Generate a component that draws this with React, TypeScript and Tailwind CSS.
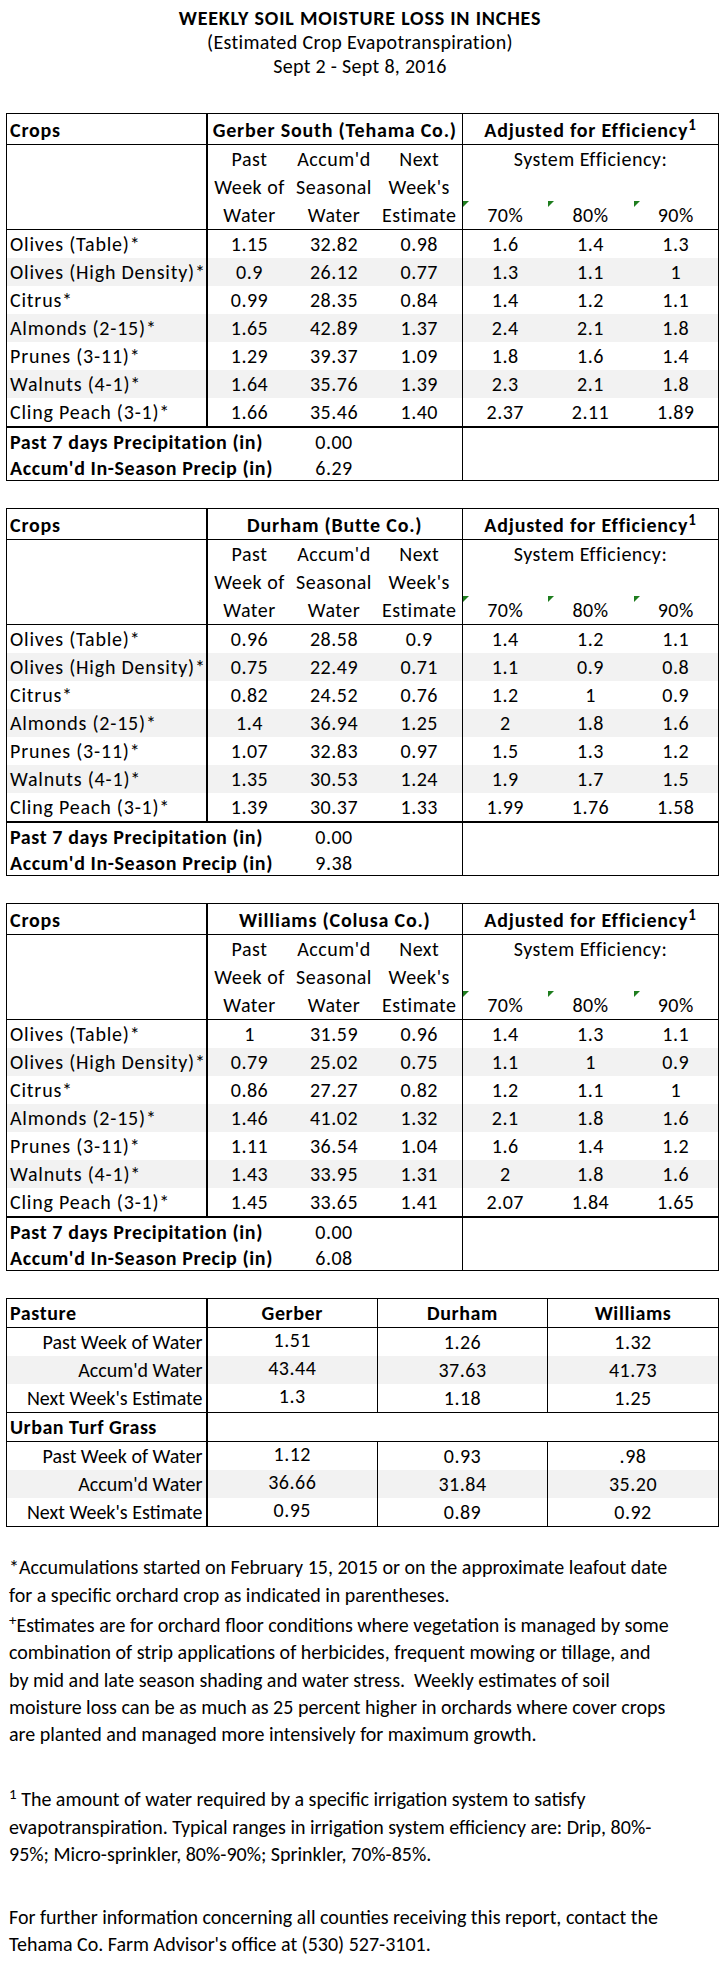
import React from 'react'

type Site = {
  title: string
  rows: string[][]
  precip: string
  accum: string
}

const crops = [
  'Olives (Table)*',
  'Olives (High Density)*',
  'Citrus*',
  'Almonds (2-15)*',
  'Prunes (3-11)*',
  'Walnuts (4-1)*',
  'Cling Peach (3-1)*',
]

const sites: Site[] = [
  {
    title: 'Gerber South (Tehama Co.)',
    rows: [
      ['1.15', '32.82', '0.98', '1.6', '1.4', '1.3'],
      ['0.9', '26.12', '0.77', '1.3', '1.1', '1'],
      ['0.99', '28.35', '0.84', '1.4', '1.2', '1.1'],
      ['1.65', '42.89', '1.37', '2.4', '2.1', '1.8'],
      ['1.29', '39.37', '1.09', '1.8', '1.6', '1.4'],
      ['1.64', '35.76', '1.39', '2.3', '2.1', '1.8'],
      ['1.66', '35.46', '1.40', '2.37', '2.11', '1.89'],
    ],
    precip: '0.00',
    accum: '6.29',
  },
  {
    title: 'Durham (Butte Co.)',
    rows: [
      ['0.96', '28.58', '0.9', '1.4', '1.2', '1.1'],
      ['0.75', '22.49', '0.71', '1.1', '0.9', '0.8'],
      ['0.82', '24.52', '0.76', '1.2', '1', '0.9'],
      ['1.4', '36.94', '1.25', '2', '1.8', '1.6'],
      ['1.07', '32.83', '0.97', '1.5', '1.3', '1.2'],
      ['1.35', '30.53', '1.24', '1.9', '1.7', '1.5'],
      ['1.39', '30.37', '1.33', '1.99', '1.76', '1.58'],
    ],
    precip: '0.00',
    accum: '9.38',
  },
  {
    title: 'Williams (Colusa Co.)',
    rows: [
      ['1', '31.59', '0.96', '1.4', '1.3', '1.1'],
      ['0.79', '25.02', '0.75', '1.1', '1', '0.9'],
      ['0.86', '27.27', '0.82', '1.2', '1.1', '1'],
      ['1.46', '41.02', '1.32', '2.1', '1.8', '1.6'],
      ['1.11', '36.54', '1.04', '1.6', '1.4', '1.2'],
      ['1.43', '33.95', '1.31', '2', '1.8', '1.6'],
      ['1.45', '33.65', '1.41', '2.07', '1.84', '1.65'],
    ],
    precip: '0.00',
    accum: '6.08',
  },
]

const pasture = [
  ['Past Week of Water', '1.51', '1.26', '1.32'],
  ["Accum'd Water", '43.44', '37.63', '41.73'],
  ["Next Week's Estimate", '1.3', '1.18', '1.25'],
]

const turf = [
  ['Past Week of Water', '1.12', '0.93', '.98'],
  ["Accum'd Water", '36.66', '31.84', '35.20'],
  ["Next Week's Estimate", '0.95', '0.89', '0.92'],
]

// little green "number stored as text" flag in the cell corner
function Flag() {
  return <span className="absolute left-0 top-0 w-0 h-0 border-t-[6px] border-r-[6px] border-t-[#1e7d1e] border-r-transparent" />
}

function CropTable({ site }: { site: Site }) {
  return (
    <table className="w-[712px] table-fixed border-collapse border border-black tracking-[0.5px]">
      <colgroup>
        <col className="w-[200px]" />
        <col className="w-[85px]" />
        <col className="w-[85px]" />
        <col className="w-[86px]" />
        <col className="w-[85px]" />
        <col className="w-[86px]" />
        <col className="w-[85px]" />
      </colgroup>
      <tbody>
        <tr className="h-[31px]">
          <td className="p-0 border-b border-r-2 border-black pl-[3px] align-bottom font-bold tracking-[0.8px]">Crops</td>
          <td colSpan={3} className="p-0 border-b border-r border-black text-center align-bottom font-bold tracking-[0.8px] whitespace-nowrap">
            {site.title}
          </td>
          <td colSpan={3} className="p-0 border-b border-black text-center align-bottom font-bold tracking-[0.8px]">
            Adjusted for Efficiency<sup>1</sup>
          </td>
        </tr>
        <tr className="h-[28px]">
          <td rowSpan={3} className="p-0 border-b border-r-2 border-black" />
          <td className="p-0 text-center">Past</td>
          <td className="p-0 text-center">Accum'd</td>
          <td className="p-0 text-center border-r border-black">Next</td>
          <td colSpan={3} className="p-0 text-center">System Efficiency:</td>
        </tr>
        <tr className="h-[28px]">
          <td className="p-0 text-center whitespace-nowrap">Week of</td>
          <td className="p-0 text-center">Seasonal</td>
          <td className="p-0 text-center border-r border-black">Week's</td>
          <td colSpan={3} className="p-0" />
        </tr>
        <tr className="h-[28px]">
          <td className="p-0 text-center border-b border-black">Water</td>
          <td className="p-0 text-center border-b border-black">Water</td>
          <td className="p-0 text-center border-b border-r border-black">Estimate</td>
          <td className="p-0 relative text-center border-b border-black"><Flag />70%</td>
          <td className="p-0 relative text-center border-b border-black"><Flag />80%</td>
          <td className="p-0 relative text-center border-b border-black"><Flag />90%</td>
        </tr>
        {site.rows.map((r, i) => (
          <tr key={i} className={i % 2 === 1 ? 'h-[28px] bg-[#f2f2f2]' : 'h-[28px]'}>
            <td className="p-0 border-r-2 border-black pl-[3px] whitespace-nowrap tracking-[0.8px]">{crops[i]}</td>
            <td className="p-0 text-center">{r[0]}</td>
            <td className="p-0 text-center">{r[1]}</td>
            <td className="p-0 text-center border-r border-black">{r[2]}</td>
            <td className="p-0 text-center">{r[3]}</td>
            <td className="p-0 text-center">{r[4]}</td>
            <td className="p-0 text-center">{r[5]}</td>
          </tr>
        ))}
        <tr className="h-[28px]">
          <td colSpan={2} className="p-0 border-t-2 border-black pl-[3px] font-bold tracking-[0.6px] whitespace-nowrap">
            Past 7 days Precipitation (in)
          </td>
          <td className="p-0 border-t-2 border-black text-center">{site.precip}</td>
          <td className="p-0 border-t-2 border-r border-black" />
          <td colSpan={3} rowSpan={2} className="p-0 border-t-2 border-black" />
        </tr>
        <tr className="h-[24px] leading-[24px]">
          <td colSpan={2} className="p-0 pl-[3px] font-bold tracking-[0.6px] whitespace-nowrap">Accum'd In-Season Precip (in)</td>
          <td className="p-0 text-center">{site.accum}</td>
          <td className="p-0 border-r border-black" />
        </tr>
      </tbody>
    </table>
  )
}

function PastureRows({ rows }: { rows: string[][] }) {
  return (
    <>
      {rows.map((r, i) => (
        <tr key={i} className={i === 1 ? 'h-[28px] bg-[#f2f2f2]' : 'h-[28px]'}>
          <td className={`p-0 border-r-2 border-black pr-[3px] text-right whitespace-nowrap tracking-normal ${i === 2 ? 'border-b' : ''}`}>{r[0]}</td>
          <td className={`p-0 align-top leading-[25px] border-r border-black text-center ${i === 2 ? 'border-b' : ''}`}>{r[1]}</td>
          <td className={`p-0 border-r border-black text-center ${i === 2 ? 'border-b' : ''}`}>{r[2]}</td>
          <td className={`p-0 border-black text-center ${i === 2 ? 'border-b' : ''}`}>{r[3]}</td>
        </tr>
      ))}
    </>
  )
}

function PastureTable() {
  return (
    <table className="w-[712px] table-fixed border-collapse border border-black tracking-[0.5px]">
      <colgroup>
        <col className="w-[200px]" />
        <col className="w-[171px]" />
        <col className="w-[170px]" />
        <col className="w-[171px]" />
      </colgroup>
      <tbody>
        <tr className="h-[28px]">
          <td className="p-0 border-b border-r-2 border-black pl-[3px] font-bold tracking-[0.6px]">Pasture</td>
          <td className="p-0 border-b border-r border-black text-center font-bold tracking-[0.6px]">Gerber</td>
          <td className="p-0 border-b border-r border-black text-center font-bold tracking-[0.6px]">Durham</td>
          <td className="p-0 border-b border-black text-center font-bold tracking-[0.6px]">Williams</td>
        </tr>
        <PastureRows rows={pasture} />
        <tr className="h-[28px]">
          <td className="p-0 border-b border-r-2 border-black pl-[3px] font-bold tracking-[0.5px] whitespace-nowrap">Urban Turf Grass</td>
          <td colSpan={3} className="p-0 border-b border-black" />
        </tr>
        <PastureRows rows={turf} />
      </tbody>
    </table>
  )
}

export default function App() {
  return (
    <div className="w-[720px] min-h-[1970px] bg-white text-black font-['Carlito','Lato',sans-serif] text-[20px] leading-[28px]">
      {/* Heading */}
      <div className="pt-[6px] text-center leading-[24px]">
        <div className="font-bold tracking-[0.8px]">WEEKLY SOIL MOISTURE LOSS IN INCHES</div>
        <div className="tracking-[0.35px]">(Estimated Crop Evapotranspiration)</div>
        <div className="tracking-[0.3px]">Sept 2 - Sept 8, 2016</div>
      </div>

      {/* Site tables */}
      <div className="mt-[35px] pl-[6px] flex flex-col gap-[27px]">
        {sites.map(s => (
          <CropTable key={s.title} site={s} />
        ))}
        <PastureTable />
      </div>

      {/* Footnotes */}
      <div className="mt-[26px] pl-[9px] whitespace-nowrap">
        <p>
          *Accumulations started on February 15, 2015 or on the approximate leafout date
          <br />
          for a specific orchard crop as indicated in parentheses.
        </p>
        <p className="mt-[3px] leading-[27.3px]">
          <sup>+</sup>Estimates are for orchard floor conditions where vegetation is managed by some
          <br />
          combination of strip applications of herbicides, frequent mowing or tillage, and
          <br />
          by mid and late season shading and water stress.&nbsp; Weekly estimates of soil
          <br />
          moisture loss can be as much as 25 percent higher in orchards where cover crops
          <br />
          are planted and managed more intensively for maximum growth.
        </p>
        <p className="mt-[38px] leading-[27.5px]">
          <sup>1</sup> The amount of water required by a specific irrigation system to satisfy
          <br />
          evapotranspiration. Typical ranges in irrigation system efficiency are: Drip, 80%-
          <br />
          95%; Micro-sprinkler, 80%-90%; Sprinkler, 70%-85%.
        </p>
        <p className="mt-[35px] leading-[27.5px]">
          For further information concerning all counties receiving this report, contact the
          <br />
          Tehama Co. Farm Advisor's office at (530) 527-3101.
        </p>
      </div>
    </div>
  )
}
